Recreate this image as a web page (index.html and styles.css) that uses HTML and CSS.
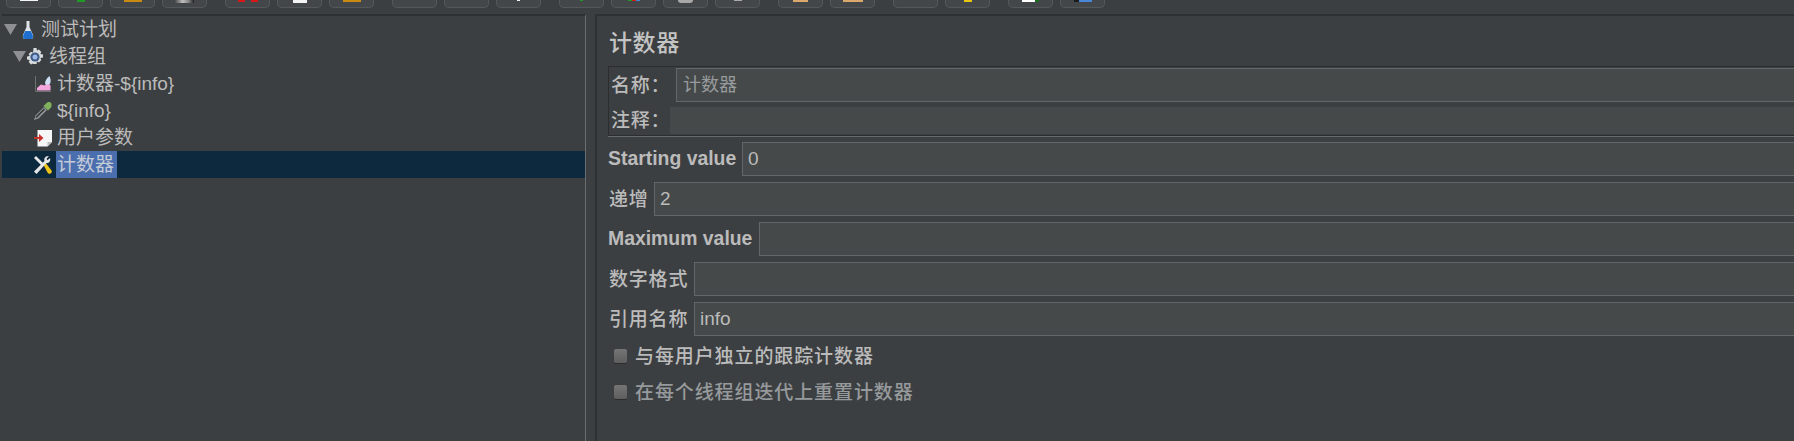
FILE: index.html
```html
<!DOCTYPE html>
<html lang="zh">
<head>
<meta charset="utf-8">
<title>计数器</title>
<link rel="stylesheet" href="styles.css">
</head>
<body>
<div class="app">
  <div class="toolbar">
    <div class="tool"><i class="ic w18 h1 white"></i></div>
    <div class="tool"><i class="ic w8 h2 green"></i></div>
    <div class="tool"><i class="ic w18 h2 orange"></i></div>
    <div class="tool"><i class="ic w19 h3 steel"></i></div>
    <div class="tool gap"><i class="ic w7 h2 red"></i><i class="ic w7 h2 red"></i></div>
    <div class="tool"><i class="ic w14 h3 white"></i></div>
    <div class="tool"><i class="ic w18 h2 orange"></i></div>
    <div class="tool gap"></div>
    <div class="tool"></div>
    <div class="tool"><i class="ic w3 h1 white"></i></div>
    <div class="tool gap"><i class="ic w3 h1 green"></i></div>
    <div class="tool"><i class="ic w4 h1 green"></i><i class="ic w4 h1 red"></i><i class="ic w4 h1 blue"></i></div>
    <div class="tool"><i class="ic w15 h3 grey round"></i></div>
    <div class="tool"><i class="ic w8 h1 grey"></i></div>
    <div class="tool gap"><i class="ic w15 h2 tan"></i></div>
    <div class="tool"><i class="ic w20 h2 tan"></i></div>
    <div class="tool gap"></div>
    <div class="tool"><i class="ic w8 h2 yellow"></i></div>
    <div class="tool gap"><i class="ic w17 h2 sheet"></i></div>
    <div class="tool"><i class="ic w5 h2 black"></i><i class="ic w13 h2 blue"></i></div>
  </div>

  <div class="panes">
    <div class="tree">
      <div class="row">
        <svg class="twisty" viewBox="0 0 13 11"><path d="M0 0H13L6.500 11Z"/></svg>
        <svg class="icon flask" viewBox="0 0 12 18"><path d="M4.500 0h3v6l3.500 8q1 4-2 4H3q-3 0-2-4l3.500-8z" fill="#dfe4ea"/><path d="M3.200 10h5.600l2.200 5q.5 3-2 3H3q-2.500 0-2-3z" fill="#1f6fd0"/></svg>
        <span class="label">测试计划</span>
      </div>
      <div class="row depth1">
        <svg class="twisty" viewBox="0 0 13 11"><path d="M0 0H13L6.500 11Z"/></svg>
        <svg class="icon gear" viewBox="0 0 18 18"><path d="M7.500 0h3l.5 2.500 2-.9 2.300 2.300-1 2 2.700.6v3l-2.700.6 1 2-2.300 2.300-2-1-.5 2.600h-3L7 15.400l-2 1L2.700 14l1-2L1 11.500v-3L3.700 8l-1-2L5 3.700l2 .9z" fill="#d8dbde"/><circle cx="9" cy="9" r="4.600" fill="#3d5a86"/><circle cx="9" cy="9" r="2.500" fill="#9db8e6"/></svg>
        <span class="label">线程组</span>
      </div>
      <div class="row depth2">
        <svg class="icon" viewBox="0 0 18 18"><path d="M1.500 1v15.500H17" fill="none" stroke="#6f7173" stroke-width="1"/><path d="M3 15.500V13l4-3.500 3.500 1 3-3 3 3v5z" fill="#f3a6dc"/><path d="M11 8.500q0-4 4.500-7.500 2 4 .8 7.500-2.800 2.500-5.300 0z" fill="#cfe0f4"/></svg>
        <span class="label">计数器-${info}</span>
      </div>
      <div class="row depth2">
        <svg class="icon" viewBox="0 0 18 18"><path d="M0 18 1.500 13.500 10 5l3 3-8.500 8.500z" fill="#8f9498"/><path d="M2 15.500 10.500 7" stroke="#2f2f2f" stroke-width="1.500"/><path d="M9.500 4l4.500 4.500 3-3q1.500-3.500-.5-5-2-1.500-4 .5z" fill="#7fb05c"/></svg>
        <span class="label">${info}</span>
      </div>
      <div class="row depth2">
        <svg class="icon" viewBox="0 0 18 18"><path d="M3.500 1H18v12l-4.500 4.500h-10z" fill="#f6f6f6"/><path d="M13.500 17.500V13H18z" fill="#bdbdbd"/><path d="M0 8h5V5l4.500 4-4.500 4v-3H0z" fill="#c9302c"/></svg>
        <span class="label">用户参数</span>
      </div>
      <div class="row depth2 selected">
        <svg class="icon" viewBox="0 0 18 18"><path d="M0 2l2-2 8 8-2 2z" fill="#e8e8e8"/><path d="M9 8l2-2 6.500 8.500q1 2-1 3-2 1-3-1z" fill="#efc418"/><path d="M0 15.500 10.500 5q-1-3 2-4.800l2.500.1-2.500 2.400 1 1.500 2.500-2.200q1 3-1.500 4.700-1 .6-2 .2L2.500 18z" fill="#e6e6e6"/></svg>
        <span class="label">计数器</span>
      </div>
    </div>

    <div class="editor">
      <h1 class="title">计数器</h1>
      <div class="namebox">
        <div class="namerow">
          <label class="cap w-name">名称：</label>
          <input class="field dim" type="text" value="计数器">
        </div>
        <div class="commentrow">
          <label class="cap w-comment">注释：</label>
          <div class="commentfield"></div>
        </div>
      </div>
      <div class="formrow">
        <label class="cap latin w-start">Starting value</label>
        <input class="field" type="text" value="0">
      </div>
      <div class="formrow">
        <label class="cap w-step">递增</label>
        <input class="field" type="text" value="2">
      </div>
      <div class="formrow">
        <label class="cap latin w-max">Maximum value</label>
        <input class="field" type="text" value="">
      </div>
      <div class="formrow">
        <label class="cap w-fmt">数字格式</label>
        <input class="field" type="text" value="">
      </div>
      <div class="formrow">
        <label class="cap w-fmt">引用名称</label>
        <input class="field" type="text" value="info">
      </div>
      <div class="check first">
        <span class="box"></span>
        <span class="cap text">与每用户独立的跟踪计数器</span>
      </div>
      <div class="check">
        <span class="box"></span>
        <span class="cap text faded">在每个线程组迭代上重置计数器</span>
      </div>
    </div>
  </div>
</div>
</body>
</html>
```
FILE: styles.css
```css
* { box-sizing: border-box; }
html, body { margin: 0; height: 100%; overflow: hidden; background: #3c3f41; }
body {
  color: #bbbbbb;
  font-family: "Liberation Sans", "Noto Sans CJK SC", sans-serif;
  font-size: 19px;
}
.app { display: flex; flex-direction: column; height: 441px; }

/* toolbar: only the lower edge of each button is in view */
.toolbar { flex: 0 0 14px; display: flex; gap: 7px; padding-left: 6px; align-items: flex-start; }
.tool {
  flex: 0 0 45px;
  height: 8px;
  display: flex;
  justify-content: center;
  align-items: flex-start;
  border: 1px solid #55585a;
  border-top: 0;
  border-radius: 0 0 5px 5px;
  background: #43474a;
}
.tool.gap { margin-left: 11px; }
.ic { display: block; }
.w3 { width: 3px; } .w4 { width: 4px; } .w5 { width: 5px; } .w7 { width: 7px; margin: 0 3px; }
.w8 { width: 8px; } .w13 { width: 13px; } .w14 { width: 14px; } .w15 { width: 15px; }
.w17 { width: 17px; } .w18 { width: 18px; } .w19 { width: 19px; } .w20 { width: 20px; }
.h1 { height: 1px; } .h2 { height: 2px; } .h3 { height: 3px; }
.white { background: #f4f4f4; }
.green { background: #1f9a24; }
.orange { background: #c98a12; }
.steel { background: linear-gradient(90deg, #4a4a4a, #bdbdbd 40%, #8a8a8a 70%, #222); }
.red { background: #d81818; }
.blue { background: #4a86d8; }
.grey { background: #a8a8a8; }
.round { border-radius: 0 0 8px 8px; }
.tan { background: #d9a86a; }
.yellow { background: #e6c514; }
.sheet { background: linear-gradient(90deg, #fff 75%, #1c6b22 75%); }
.black { background: #1c1c1c; }

.panes { flex: 1; display: flex; min-height: 0; }

/* test plan tree */
.tree {
  flex: 0 0 584px;
  margin-left: 2px;
  border-top: 2px solid #2e3133;
  border-right: 1px solid #6b6e70;
}
.row { height: 27px; display: flex; align-items: center; padding-left: 2px; white-space: nowrap; }
.row.depth1 { padding-left: 11px; }
.row.depth2 { padding-left: 32px; }
.twisty { flex: none; width: 13px; height: 11px; fill: #8e9092; margin-right: 3px; }
.icon { flex: none; width: 18px; height: 18px; }
.icon.flask { width: 12px; margin-left: 2px; margin-right: 2px; }
.icon.gear { margin-left: -3px; }
.label { height: 27px; margin-left: 4px; padding: 0 1px; line-height: 28px; }
.selected { background: #0d293e; }
.selected .label { padding: 0 3px 0 1px; background: #4b6eaf; color: #c3cbd6; }

/* counter editor */
.editor {
  flex: 1;
  min-width: 0;
  margin-left: 9px;
  padding-left: 11px;
  border-top: 2px solid #2e3133;
  border-left: 2px solid #2e3133;
}
.title { margin: 0; height: 50px; font-size: 23px; font-weight: 500; line-height: 54px; letter-spacing: .6px; padding-left: 1px; color: #c4c4c4; }
.namebox {
  height: 70px;
  padding: 1px 0 0 1px;
  border-top: 1px solid #2b2d2f;
  border-left: 1px solid #2b2d2f;
  border-bottom: 1px solid #2b2d2f;
  box-shadow: 0 1px 0 #686b6d;
  margin-bottom: 6px;
}
.namerow { display: flex; align-items: center; height: 34px; }
.commentrow { display: flex; align-items: center; height: 27px; margin-top: 5px; }
.commentfield { flex: 1; height: 27px; background: #45494a; }
.cap { flex: none; font-size: 19px; font-weight: 500; letter-spacing: .8px; white-space: nowrap; padding: 0 0 4px 1px; }
.cap.latin { font-size: 19.4px; font-weight: 700; letter-spacing: 0; padding: 0 0 1px; }
.cap.text { padding-left: 0; letter-spacing: .9px; }
.w-name { width: 66px; }
.w-comment { width: 60px; }
.w-start { width: 134px; }
.w-step { width: 46px; }
.w-max { width: 151px; }
.w-fmt { width: 86px; }
.formrow { display: flex; align-items: center; height: 34px; margin-bottom: 6px; }
.field {
  flex: 1;
  min-width: 0;
  height: 34px;
  padding: 0 5px;
  border: 1px solid #646769;
  border-right: 0;
  border-radius: 0;
  outline: 0;
  background: #45494a;
  color: #bbbbbb;
  font: 19px "Liberation Sans", "Noto Sans CJK SC", sans-serif;
}
.field.dim { color: #989b9d; padding: 0 6px 4px; font-size: 18px; }
.check { display: flex; align-items: center; gap: 8px; height: 36px; padding-left: 6px; }
.check.first { margin-top: -4px; }
.box {
  flex: none;
  width: 13px;
  height: 14px;
  border-radius: 2px;
  background: linear-gradient(#757575, #5e5e5e);
  box-shadow: 0 1px 0 #2c2c2c;
}
.faded { color: #979a9c; }
```
